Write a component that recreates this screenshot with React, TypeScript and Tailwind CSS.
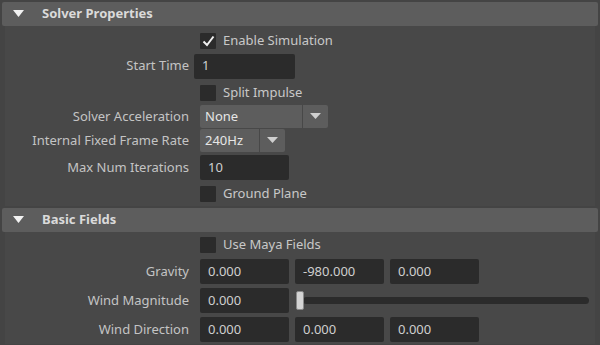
import type { ReactNode } from "react";

const font = { fontFamily: '"Noto Sans", "Open Sans", sans-serif' };

function SectionHeader({ title }: { title: string }) {
  return (
    <div className="mx-[2px] flex h-[24px] items-center rounded-[2px] bg-[#5d5d5d]">
      <svg width="11" height="8" viewBox="0 0 11 8" className="ml-[11px]">
        <polygon points="0,0 11,0 5.5,7" fill="#f2f2f2" />
      </svg>
      <span className="ml-[18px] text-[13px] font-bold text-[#dadada]">{title}</span>
    </div>
  );
}

function Row({
  label,
  height,
  gap = "ml-[11px]",
  children,
}: {
  label?: string;
  height: string;
  gap?: string;
  children: ReactNode;
}) {
  return (
    <div className={`flex items-center ${height}`}>
      <div className="w-[184px] shrink-0 text-right text-[13px] text-[#c4c4c4]">{label}</div>
      <div className={`flex flex-1 items-center gap-[6px] ${gap}`}>{children}</div>
    </div>
  );
}

function Checkbox({ label, checked = false }: { label: string; checked?: boolean }) {
  return (
    <div className="flex items-center">
      <div className="flex h-[16px] w-[16px] items-center justify-center rounded-[1px] bg-[#2b2b2b]">
        {checked && (
          <svg width="13" height="12" viewBox="0 0 13 12">
            <path d="M1.5 6.5 L5 10 L11.5 1.5" stroke="#f0f0f0" strokeWidth="2" fill="none" />
          </svg>
        )}
      </div>
      <span className="ml-[7px] text-[13px] text-[#c8c8c8]">{label}</span>
    </div>
  );
}

function Field({ value, width = "w-[89px]" }: { value: string; width?: string }) {
  return (
    <div className={`flex h-[25px] items-center rounded-[2px] bg-[#2b2b2b] pl-[8px] text-[13px] text-[#cfcfcf] ${width}`}>
      {value}
    </div>
  );
}

function Dropdown({ value, main, arrow }: { value: string; main: string; arrow: string }) {
  return (
    <div className="flex h-[23px] items-stretch gap-[1px] text-[13px] text-[#e6e6e6]">
      <div className={`flex items-center rounded-l-[2px] bg-[#5d5d5d] pl-[5px] ${main}`}>{value}</div>
      <div className={`flex items-center justify-center rounded-r-[2px] bg-[#5d5d5d] ${arrow}`}>
        <svg width="11" height="7" viewBox="0 0 11 7">
          <polygon points="0,0 11,0 5.5,6" fill="#cfcfcf" />
        </svg>
      </div>
    </div>
  );
}

export default function App() {
  return (
    <div className="h-[345px] w-[600px] overflow-hidden bg-[#444444]" style={font}>
      <div className="pt-[2px]">
        <SectionHeader title="Solver Properties" />
        <div className="mx-[5px] bg-[#484848] pt-[3px]">
          <Row height="h-[23px]">
            <Checkbox label="Enable Simulation" checked />
          </Row>
          <Row label="Start Time" height="h-[28px]" gap="ml-[5px]">
            <Field value="1" width="w-[101px]" />
          </Row>
          <Row height="h-[25px]">
            <Checkbox label="Split Impulse" />
          </Row>
          <Row label="Solver Acceleration" height="h-[23px]">
            <Dropdown value="None" main="w-[102px]" arrow="w-[25px]" />
          </Row>
          <Row label="Internal Fixed Frame Rate" height="h-[25px]">
            <Dropdown value="240Hz" main="w-[59px]" arrow="w-[25px]" />
          </Row>
          <Row label="Max Num Iterations" height="h-[29px]">
            <Field value="10" />
          </Row>
          <Row height="h-[24px]">
            <Checkbox label="Ground Plane" />
          </Row>
        </div>
        <div className="pt-[2px]">
          <SectionHeader title="Basic Fields" />
        </div>
        <div className="mx-[5px] bg-[#484848] pt-[1px]">
          <Row height="h-[24px]">
            <Checkbox label="Use Maya Fields" />
          </Row>
          <Row label="Gravity" height="h-[29px]">
            <Field value="0.000" />
            <Field value="-980.000" />
            <Field value="0.000" />
          </Row>
          <Row label="Wind Magnitude" height="h-[29px]">
            <Field value="0.000" />
            <div className="relative flex h-[25px] w-[294px] items-center">
              <div className="ml-[8px] h-[7px] flex-1 rounded-full bg-[#2b2b2b]" />
              <div className="absolute left-[1px] top-[3px] h-[19px] w-[8px] rounded-[2px] border border-[#8a8a8a] bg-[#d4d4d4]" />
            </div>
          </Row>
          <Row label="Wind Direction" height="h-[29px]">
            <Field value="0.000" />
            <Field value="0.000" />
            <Field value="0.000" />
          </Row>
        </div>
      </div>
    </div>
  );
}
